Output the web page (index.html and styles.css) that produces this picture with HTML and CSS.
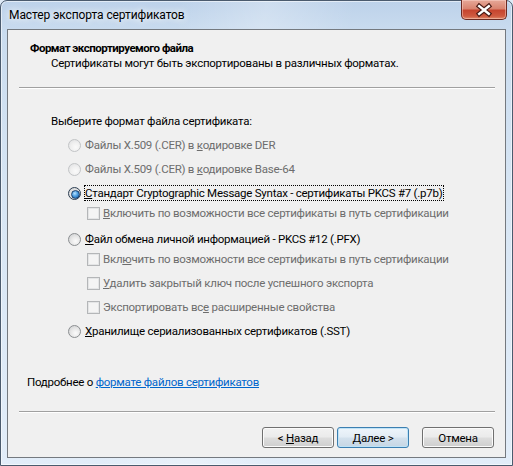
FILE: index.html
```html
<!DOCTYPE html>
<html lang="ru">
<head>
    <meta charset="UTF-8">
    <title>Мастер экспорта сертификатов</title>
    <link rel="stylesheet" href="styles.css">
</head>
<body>

    <div class="window">
        <div class="titlebar">
            <span class="caption">Мастер экспорта сертификатов</span>
            <button class="close-btn" type="button" aria-label="Закрыть">
                <svg width="46" height="20" viewBox="0 0 46 20">
                    <path d="M18 6 L28 14 M28 6 L18 14" stroke="#4a1a14" stroke-width="5" stroke-linecap="square"/>
                    <path d="M18 6 L28 14 M28 6 L18 14" stroke="#ffffff" stroke-width="2.6" stroke-linecap="square"/>
                </svg>
            </button>
        </div>

        <div class="client">
            <div class="page-header">
                <h1 class="page-title">Формат экспортируемого файла</h1>
                <p class="page-subtitle">Сертификаты могут быть экспортированы в различных форматах.</p>
            </div>
            <div class="rule"></div>

            <div class="page-body">
                <p class="prompt">Выберите формат файла сертификата:</p>

                <div class="options">
                    <div class="opt-group">
                        <label class="opt disabled"><span class="radio"></span><span class="label">Файлы X.509 (.CER) в <u>к</u>одировке DER</span></label>
                    </div>
                    <div class="opt-group">
                        <label class="opt disabled"><span class="radio"></span><span class="label">Файлы X.509 (.CER) в <u>к</u>одировке Base-64</span></label>
                    </div>
                    <div class="opt-group">
                        <label class="opt"><span class="radio checked"></span><span class="label focused"><u>С</u>тандарт Cryptographic Message Syntax - сертификаты PKCS #7 (.p7b)</span></label>
                        <div class="sub-options">
                            <label class="opt sub disabled"><span class="check"></span><span class="label"><u>В</u>ключить по возможности все сертификаты в путь сертификации</span></label>
                        </div>
                    </div>
                    <div class="opt-group after-sub">
                        <label class="opt"><span class="radio"></span><span class="label"><u>Ф</u>айл обмена личной информацией - PKCS #12 (.PFX)</span></label>
                        <div class="sub-options">
                            <label class="opt sub disabled"><span class="check"></span><span class="label">Вкл<u>ю</u>чить по возможности все сертификаты в путь сертификации</span></label>
                            <label class="opt sub disabled"><span class="check"></span><span class="label"><u>У</u>далить закрытый ключ после успешного экспорта</span></label>
                            <label class="opt sub disabled"><span class="check"></span><span class="label">Экспортировать вс<u>е</u> расширенные свойства</span></label>
                        </div>
                    </div>
                    <div class="opt-group">
                        <label class="opt"><span class="radio"></span><span class="label"><u>Х</u>ранилище сериализованных сертификатов (.SST)</span></label>
                    </div>
                </div>
            </div>

            <div class="page-footer">
                <p class="more">Подробнее о <a href="#">формате файлов сертификатов</a></p>
                <div class="rule"></div>
                <div class="buttons">
                    <button class="btn" type="button">&lt; <u>Н</u>азад</button>
                    <button class="btn default" type="button"><u>Д</u>алее &gt;</button>
                    <button class="btn cancel" type="button">Отмена</button>
                </div>
            </div>
        </div>
    </div>

</body>
</html>
```

FILE: styles.css
```css
/* General Styling */
* {
    margin: 0;
    padding: 0;
    box-sizing: border-box;
}

body {
    width: 513px;
    height: 466px;
    overflow: hidden;
    font-family: Roboto, "Noto Sans", sans-serif;
    font-size: 11.5px;
    letter-spacing: -0.25px;
    color: #000;
    background: #dfeaf6;
}

/* Window frame (Aero glass) */
.window {
    position: relative;
    width: 513px;
    height: 466px;
    display: flex;
    flex-direction: column;
    padding: 0 6px 7px 6px;
    border: 1px solid #4b5b6e;
    border-radius: 7px 7px 0 0;
    background:
        linear-gradient(100deg, rgba(255,255,255,0) 30%, rgba(255,255,255,0.25) 45%, rgba(255,255,255,0) 60%),
        linear-gradient(180deg, #bdd2ea 0%, #cadcef 7%, #d8e6f4 45%, #e2edf9 100%);
    box-shadow: inset 0 0 0 1px rgba(255, 255, 255, 0.55);
}

.titlebar {
    height: 28px;
    display: flex;
    align-items: center;
    padding-left: 2px;
}

.caption {
    font-size: 12px;
    letter-spacing: -0.1px;
    line-height: 16px;
    text-shadow: 0 0 6px rgba(255, 255, 255, 0.9), 0 0 10px rgba(255, 255, 255, 0.7);
}

.close-btn {
    position: absolute;
    top: -1px;
    right: 5px;
    width: 46px;
    height: 20px;
    border: 1px solid #6b2a22;
    border-top: none;
    border-radius: 0 0 5px 5px;
    background: linear-gradient(180deg, #e6a898 0%, #d98470 45%, #c6452f 55%, #cf5a40 85%, #e08a6a 100%);
    box-shadow: inset 0 0 0 1px rgba(255, 220, 210, 0.45);
    display: flex;
    align-items: center;
    justify-content: center;
}

.close-btn svg {
    display: block;
}

/* Client area */
.client {
    flex: 1;
    display: flex;
    flex-direction: column;
    background: #f0f0f0;
    border: 1px solid #74797f;
}

.page-header {
    padding: 11px 0 0 22px;
}

.page-title {
    font-size: 11.5px;
    font-weight: 700;
    line-height: 15px;
    letter-spacing: -0.5px;
}

.page-subtitle {
    line-height: 15px;
    padding-left: 21px;
}

.rule {
    height: 2px;
    margin: 16px 10px 0 11px;
    border-top: 1px solid #a0a0a0;
    border-bottom: 1px solid #ffffff;
}

.page-body {
    padding-left: 43px;
}

.prompt {
    margin-top: 24px;
    line-height: 16px;
}

.options {
    padding-left: 17px;
    margin-top: 8px;
}

.opt-group + .opt-group {
    margin-top: 8px;
}

.opt-group.after-sub {
    margin-top: 10px;
}

.opt {
    display: flex;
    align-items: center;
    height: 16px;
}

.sub-options {
    margin-top: 4px;
    padding-left: 19px;
}

.opt.sub + .opt.sub {
    margin-top: 8px;
}

.opt .label {
    line-height: 14px;
    padding: 0 1px 0 0;
    border: 1px solid transparent;
    white-space: nowrap;
}

.opt .label.focused {
    border: 1px dotted #000;
}

.opt.disabled .label {
    color: #6d6d6d;
}

/* Radio buttons */
.radio {
    position: relative;
    flex-shrink: 0;
    width: 13px;
    height: 13px;
    margin-right: 3px;
    border-radius: 50%;
    border: 1px solid #8b8e91;
    background: radial-gradient(circle at 60% 65%, #fbfbfb 0, #e8e8e8 45%, #c9cbcd 100%);
}

.opt.disabled .radio {
    border-color: #c2c4c6;
    background: radial-gradient(circle at 60% 65%, #fafafa 0, #f0f0f0 45%, #dcdddf 100%);
}

.radio.checked {
    border-color: #2c3e52;
}

.radio.checked::after {
    content: "";
    position: absolute;
    top: 2px;
    left: 2px;
    width: 7px;
    height: 7px;
    border-radius: 50%;
    border: 1px solid #1b3e6a;
    background: radial-gradient(circle at 40% 35%, #b8e2ff 0, #4c9de0 45%, #0f4f95 100%);
}

/* Check boxes */
.check {
    flex-shrink: 0;
    width: 13px;
    height: 13px;
    margin-right: 2px;
    border: 1px solid #b4b6b8;
    background: #f4f4f4;
    box-shadow: inset 0 0 0 1px #e4e5e6;
}

/* Footer */
.page-footer {
    margin-top: auto;
}

.more {
    padding-left: 19px;
    line-height: 16px;
}

.more a {
    color: #0066cc;
    text-decoration: underline;
}

.page-footer .rule {
    margin-top: 21px;
}

.buttons {
    display: flex;
    justify-content: flex-end;
    padding: 14px 11px 9px 0;
}

.btn {
    width: 72px;
    height: 21px;
    font-family: inherit;
    font-size: 11.5px;
    letter-spacing: inherit;
    color: #000;
    border: 1px solid #707070;
    border-radius: 3px;
    background: linear-gradient(180deg, #f2f2f2 0%, #ebebeb 48%, #dddddd 52%, #cfcfcf 100%);
    box-shadow: inset 0 0 0 1px #fbfbfb;
}

.btn.default {
    margin-left: 3px;
    border-color: #3c7fb1;
    background: linear-gradient(180deg, #eef5fb 0%, #e2ecf5 48%, #d3e1ed 52%, #c6d6e4 100%);
    box-shadow: inset 0 0 0 1px #bfe3f7;
}

.btn.cancel {
    margin-left: 13px;
}
```
